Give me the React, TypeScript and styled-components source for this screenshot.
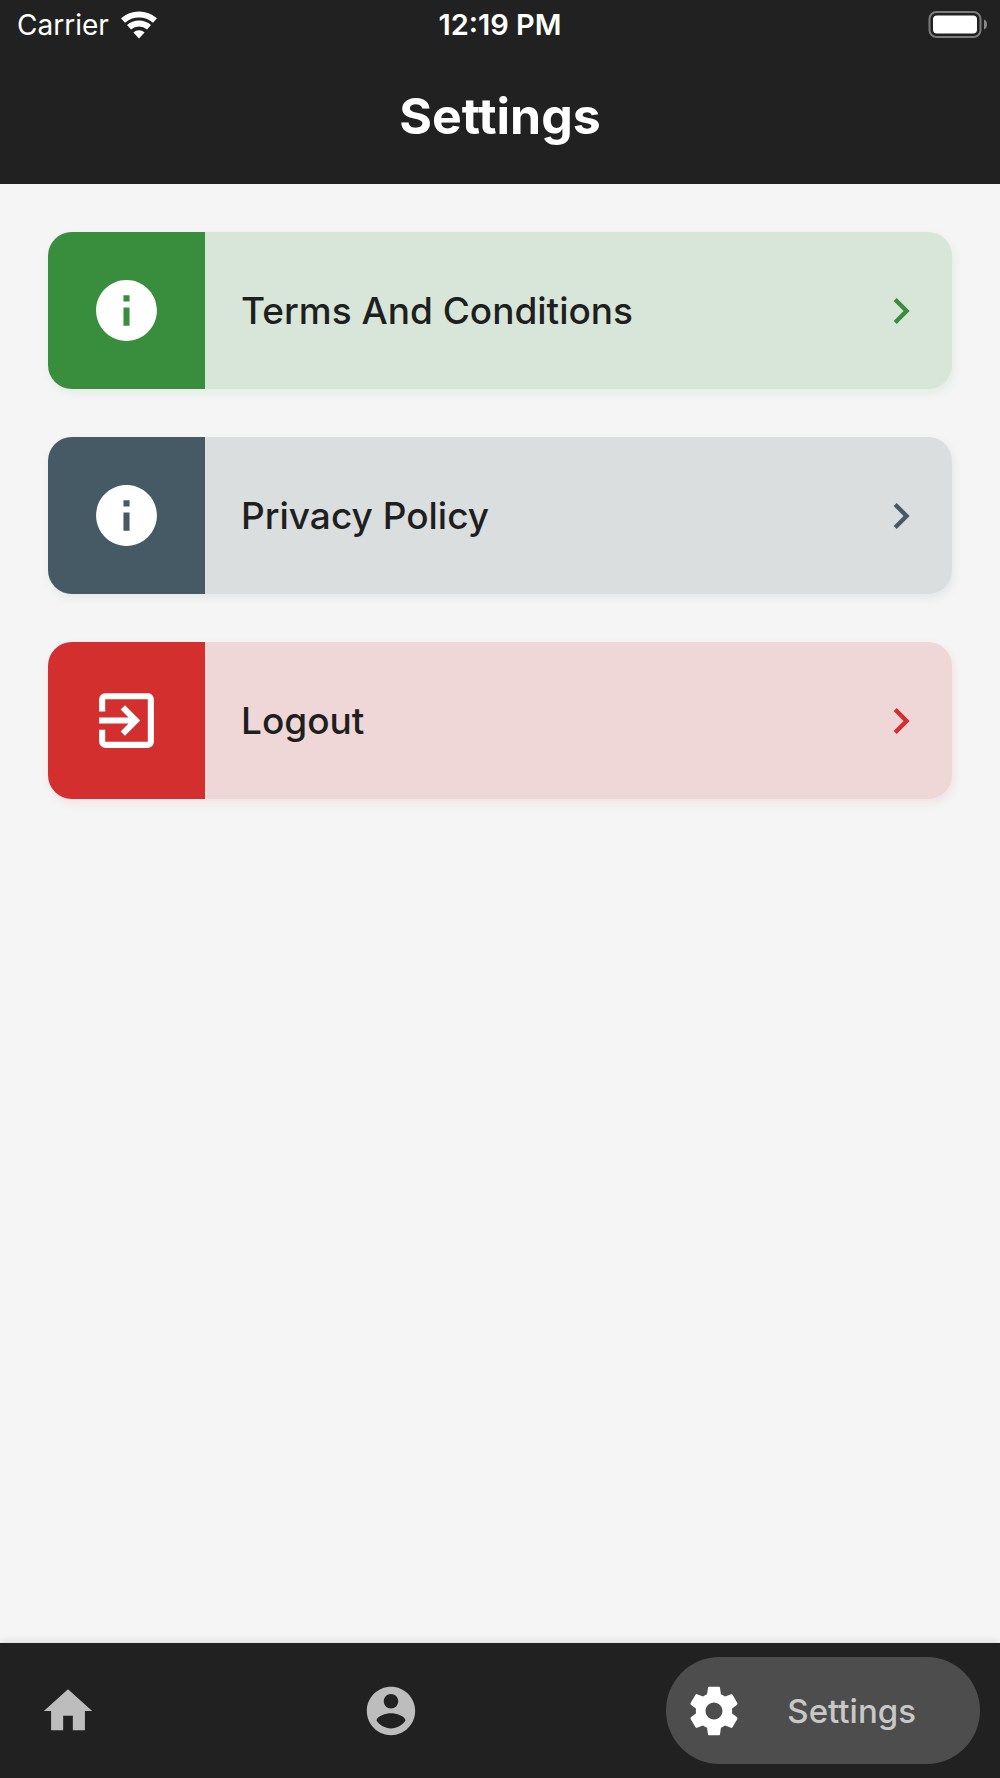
import React from "react";
import styled, { createGlobalStyle } from "styled-components";
import { MdChevronRight, MdExitToApp, MdInfo } from "react-icons/md";

const GlobalStyle = createGlobalStyle`
  * {
    box-sizing: border-box;
  }
  body {
    margin: 0;
    background: #f5f5f5;
    font-family: Inter, "Liberation Sans", sans-serif;
  }
`;

const Screen = styled.div`
  display: flex;
  flex-direction: column;
  min-height: 100vh;
`;

const Header = styled.header`
  background: #212121;
  color: #ffffff;
  padding-bottom: 36px;
`;

const StatusBar = styled.div`
  display: grid;
  grid-template-columns: 1fr auto 1fr;
  align-items: center;
  height: 48px;
  padding: 2px 12px 0;
  font-size: 28px;
  line-height: 32px;
`;

const Carrier = styled.div`
  display: flex;
  align-items: center;
  gap: 11px;
  padding-left: 5px;
`;

const Time = styled.time`
  font-size: 29px;
  font-weight: 600;
`;

const Battery = styled.svg`
  justify-self: end;
`;

const Title = styled.h1`
  margin: 36px 0 0;
  font-size: 50px;
  line-height: 64px;
  font-weight: 700;
  text-align: center;
`;

const List = styled.main`
  flex: 1;
  display: flex;
  flex-direction: column;
  gap: 48px;
  padding: 48px;
`;

const Row = styled.button<{ $rgb: string; $tint: string }>`
  display: flex;
  align-items: center;
  width: 100%;
  padding: 0 25px 0 0;
  border: 0;
  border-radius: 24px;
  overflow: hidden;
  background: ${(p) => p.$tint};
  box-shadow: 2px 4px 10px rgba(${(p) => p.$rgb}, 0.09);
  color: rgb(${(p) => p.$rgb});
  font: inherit;
  text-align: left;
  cursor: pointer;
`;

const RowIcon = styled.span<{ $rgb: string }>`
  display: flex;
  align-items: center;
  justify-content: center;
  width: 157px;
  height: 157px;
  background: rgb(${(p) => p.$rgb});
  color: #ffffff;
`;

const RowLabel = styled.span`
  flex: 1;
  padding-left: 36px;
  color: #1e1f1e;
  font-size: 37px;
  line-height: 48px;
  font-weight: 500;
`;

const TabBar = styled.nav`
  display: flex;
  align-items: center;
  justify-content: space-between;
  padding: 14px 20px;
  background: #212121;
  box-shadow: 0 -2px 8px rgba(0, 0, 0, 0.1);
`;

const Tab = styled.button<{ $active?: boolean }>`
  display: flex;
  align-items: center;
  gap: 44px;
  height: 107px;
  padding: ${(p) => (p.$active ? "0 64px 0 19px" : "0 19px")};
  border: 0;
  border-radius: 54px;
  background: ${(p) => (p.$active ? "#4d4d4d" : "transparent")};
  color: ${(p) => (p.$active ? "#ffffff" : "#bdbdbd")};
  font: inherit;
  cursor: pointer;
`;

const TabLabel = styled.span`
  color: #c8c8c8;
  font-size: 33px;
  line-height: 40px;
  font-weight: 500;
`;

const rows = [
  { label: "Terms And Conditions", rgb: "56, 142, 60", tint: "#d8e6d9", Icon: MdInfo },
  { label: "Privacy Policy", rgb: "69, 90, 100", tint: "#dadedf", Icon: MdInfo },
  { label: "Logout", rgb: "211, 47, 47", tint: "#efd7d7", Icon: MdExitToApp },
];

const HOME = "M10 20v-6h4v6h5v-8h3L12 3 2 12h3v8z";
const ACCOUNT =
  "M12 2C6.48 2 2 6.48 2 12s4.48 10 10 10 10-4.48 10-10S17.52 2 12 2zm0 3c1.66 0 3 1.34 3 3s-1.34 3-3 3-3-1.34-3-3 1.34-3 3-3zm0 14.2c-2.5 0-4.71-1.28-6-3.22.03-1.99 4-3.08 6-3.08 1.99 0 5.97 1.09 6 3.08-1.29 1.94-3.5 3.22-6 3.22z";
const GEAR =
  "M19.43 12.98c.04-.32.07-.64.07-.98s-.03-.66-.07-.98l2.11-1.65c.19-.15.24-.42.12-.64l-2-3.46c-.12-.22-.39-.3-.61-.22l-2.49 1c-.52-.4-1.08-.73-1.69-.98l-.38-2.65C14.46 2.18 14.25 2 14 2h-4c-.25 0-.46.18-.49.42l-.38 2.65c-.61.25-1.17.59-1.69.98l-2.49-1c-.23-.09-.49 0-.61.22l-2 3.46c-.13.22-.07.49.12.64l2.11 1.65c-.04.32-.07.65-.07.98s.03.66.07.98l-2.11 1.65c-.19.15-.24.42-.12.64l2 3.46c.12.22.39.3.61.22l2.49-1c.52.4 1.08.73 1.69.98l.38 2.65c.03.24.24.42.49.42h4c.25 0 .46-.18.49-.42l.38-2.65c.61-.25 1.17-.59 1.69-.98l2.49 1c.23.09.49 0 .61-.22l2-3.46c.12-.22.07-.49-.12-.64l-2.11-1.65zM12 15.5c-1.93 0-3.5-1.57-3.5-3.5s1.57-3.5 3.5-3.5 3.5 1.57 3.5 3.5-1.57 3.5-3.5 3.5z";

function TabIcon({ path }: { path: string }) {
  return (
    <svg width="58" height="58" viewBox="0 0 24 24" fill="currentColor" aria-hidden="true">
      <path d={path} />
    </svg>
  );
}

function WifiIcon() {
  return (
    <svg width="38" height="28" viewBox="0 0 38 28" aria-hidden="true">
      <g fill="none" stroke="#ffffff" strokeWidth="6">
        <path d="M3 9.600A24 24 0 0 1 35 9.600" />
        <path d="M9 16.300A15 15 0 0 1 29 16.300" />
      </g>
      <path d="M13.400 21.400a8.500 8.500 0 0 1 11.200 0L19 27.500z" fill="#ffffff" />
    </svg>
  );
}

export default function App() {
  return (
    <Screen>
      <GlobalStyle />
      <Header>
        <StatusBar>
          <Carrier>
            Carrier
            <WifiIcon />
          </Carrier>
          <Time>12:19 PM</Time>
          <Battery width="60" height="28" viewBox="0 0 60 28" role="img" aria-label="Battery full">
            <rect x="1.5" y="1" width="51" height="25" rx="7" fill="none" stroke="#7c7c7c" strokeWidth="2" />
            <rect x="5" y="4.500" width="44" height="18" rx="4" fill="#ffffff" />
            <path d="M56 8.500c4 1.500 4 8.500 0 10z" fill="#8a8a8a" />
          </Battery>
        </StatusBar>
        <Title>Settings</Title>
      </Header>
      <List>
        {rows.map(({ label, rgb, tint, Icon }) => (
          <Row key={label} type="button" $rgb={rgb} $tint={tint}>
            <RowIcon $rgb={rgb}>
              <Icon size={73} />
            </RowIcon>
            <RowLabel>{label}</RowLabel>
            <MdChevronRight size={52} />
          </Row>
        ))}
      </List>
      <TabBar>
        <Tab type="button" aria-label="Home">
          <TabIcon path={HOME} />
        </Tab>
        <Tab type="button" aria-label="Account">
          <TabIcon path={ACCOUNT} />
        </Tab>
        <Tab type="button" aria-current="page" $active>
          <TabIcon path={GEAR} />
          <TabLabel>Settings</TabLabel>
        </Tab>
      </TabBar>
    </Screen>
  );
}
